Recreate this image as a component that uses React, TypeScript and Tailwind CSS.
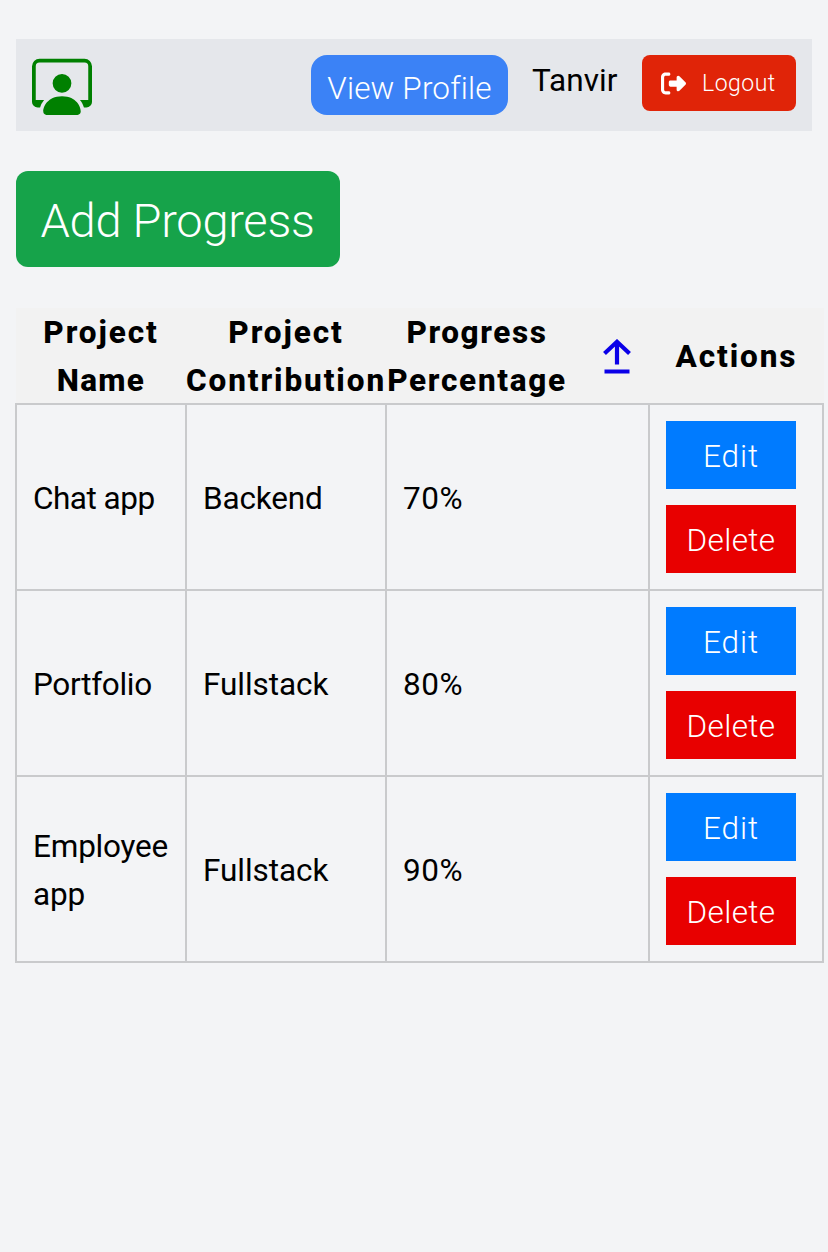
import { BsPersonWorkspace } from "react-icons/bs";
import { FaRightFromBracket } from "react-icons/fa6";

const rows = [
  { name: "Chat app", nameClass: "tracking-[-0.5px]", contribution: "Backend", contributionClass: "tracking-[-0.15px]", percentage: "70%" },
  { name: "Portfolio", nameClass: "tracking-[-0.3px]", contribution: "Fullstack", contributionClass: "tracking-[-0.05px]", percentage: "80%" },
  { name: "Employee app", nameClass: "tracking-[-0.2px]", contribution: "Fullstack", contributionClass: "tracking-[-0.05px]", percentage: "90%" },
];

function SortIcon() {
  return (
    <svg width="28" height="36" viewBox="0 0 28 36" fill="none" stroke="#0b00e8" strokeWidth="4.2">
      <path d="M1.5 14.5 14 2.8 26.5 14.5M14 3v22.5M1.5 32.5h25" />
    </svg>
  );
}

export default function App() {
  return (
    <div className="min-h-[1252px] w-[828px] overflow-hidden bg-[#f3f4f6] pt-[39px] font-['Roboto',sans-serif] text-[31.5px] leading-[48px] font-normal text-black">
      <header className="mx-4 flex h-[92px] items-start bg-[#e5e7eb] p-4">
        <BsPersonWorkspace size={60} color="#008000" />
        <button className="ml-auto flex h-[60px] w-[197px] items-center justify-center rounded-2xl bg-[#3b82f6] pt-[7px] font-light whitespace-nowrap text-white">
          <span className="tracking-[0.15px]">View Profile</span>
        </button>
        <span className="ml-6 w-[86px] pt-[2px] tracking-[0.05px]">Tanvir</span>
        <button className="ml-6 flex h-14 w-[154px] items-center rounded-lg bg-[#e02408] pl-[19px] text-[23px] text-white">
          <FaRightFromBracket size={25} />
          <span className="ml-4 pt-px font-light tracking-[0.5px]">Logout</span>
        </button>
      </header>
      <button className="mt-10 ml-4 flex h-24 w-[324px] items-center justify-center rounded-xl bg-[#16a34a] pt-[3px] pr-px text-[47px] font-light whitespace-nowrap text-white">
        <span className="tracking-[-0.25px]">Add Progress</span>
      </button>
      <section className="mt-[41px] ml-[15px] w-[809px]">
        <div className="ml-px grid h-24 grid-cols-[170px_200px_263px_175px] items-center bg-[#f2f2f2] text-center font-extrabold">
          <div className="flex flex-col items-center pt-px">
            <span className="tracking-[1.9px]">Project</span>
            <span className="tracking-[1.3px]">Name</span>
          </div>
          <div className="flex flex-col items-center pt-px">
            <span className="tracking-[1.9px]">Project</span>
            <span className="tracking-[1.9px]">Contribution</span>
          </div>
          <div className="flex items-center">
            <div className="flex w-[182px] flex-col items-center pt-px">
              <span className="tracking-[1.6px]">Progress</span>
              <span className="tracking-[1.7px]">Percentage</span>
            </div>
            <div className="ml-[35px]">
              <SortIcon />
            </div>
          </div>
          <span className="pt-px tracking-[1.9px]">Actions</span>
        </div>
        <div className="-mt-px border-t-2 border-l-2 border-[#c9cacc]">
          {rows.map((row) => (
            <div key={row.name} className="grid h-[186px] grid-cols-[170px_200px_263px_174px] *:border-r-2 *:border-b-2 *:border-[#c9cacc]">
              <div className={`flex items-center pt-[3px] pl-4 ${row.nameClass}`}>{row.name}</div>
              <div className={`flex items-center pt-[3px] pl-4 ${row.contributionClass}`}>{row.contribution}</div>
              <div className="flex items-center pt-[3px] pl-4 tracking-[0.5px]">{row.percentage}</div>
              <div className="flex flex-col gap-4 p-4 font-light text-white">
                <button className="h-[68px] w-[130px] bg-[#007bff] pt-[3px] tracking-[0.9px]">Edit</button>
                <button className="h-[68px] w-[130px] bg-[#e80000] pt-[3px] tracking-[0.4px]">Delete</button>
              </div>
            </div>
          ))}
        </div>
      </section>
    </div>
  );
}
